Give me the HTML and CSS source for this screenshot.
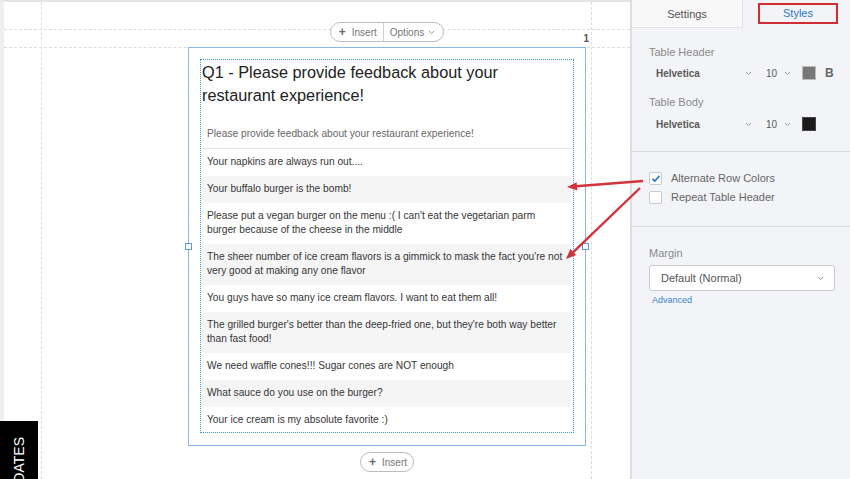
FILE: index.html
```html
<!DOCTYPE html>
<html lang="en">
<head>
    <meta charset="UTF-8">
    <meta name="viewport" content="width=device-width, initial-scale=1.0">
    <title>Survey Editor - Styles</title>
    <link rel="stylesheet" href="styles.css">
</head>
<body>
    <div class="canvas">
        <div class="guide guide-v guide-left"></div>
        <div class="guide guide-v guide-right"></div>
        <div class="guide guide-h guide-top"></div>
        <div class="guide guide-h guide-block"></div>

        <div class="stage">
            <div class="toolbar">
                <span></span>
                <div class="pill">
                    <span class="pill-part"><b class="plus">+</b> Insert</span>
                    <span class="pill-part pill-sep">Options
                        <svg width="7" height="5" viewBox="0 0 7 5"><path d="M1 1 L3.5 3.5 L6 1" fill="none" stroke="#999" stroke-width="1"/></svg>
                    </span>
                </div>
                <span class="q-number">1</span>
            </div>

            <div class="card">
                <span class="handle handle-l"></span>
                <span class="handle handle-r"></span>
                <div class="question">
                    <h2 class="q-title">Q1 - Please provide feedback about your restaurant experience!</h2>
                    <div class="table">
                        <div class="table-head">Please provide feedback about your restaurant experience!</div>
                        <div class="row">Your napkins are always run out....</div>
                        <div class="row">Your buffalo burger is the bomb!</div>
                        <div class="row">Please put a vegan burger on the menu :( I can't eat the vegetarian parm burger because of the cheese in the middle</div>
                        <div class="row">The sheer number of ice cream flavors is a gimmick to mask the fact you're not very good at making any one flavor</div>
                        <div class="row">You guys have so many ice cream flavors. I want to eat them all!</div>
                        <div class="row">The grilled burger's better than the deep-fried one, but they're both way better than fast food!</div>
                        <div class="row">We need waffle cones!!! Sugar cones are NOT enough</div>
                        <div class="row">What sauce do you use on the burger?</div>
                        <div class="row">Your ice cream is my absolute favorite :)</div>
                    </div>
                </div>
            </div>

            <div class="bottom-bar">
                <div class="pill">
                    <span class="pill-part"><b class="plus">+</b> Insert</span>
                </div>
            </div>
        </div>
    </div>

    <div class="panel">
        <div class="tabs">
            <div class="tab">Settings</div>
            <div class="tab tab-active"><span class="tab-box">Styles</span></div>
        </div>

        <div class="section">
            <div class="label">Table Header</div>
            <div class="font-row">
                <span class="font-name">Helvetica</span>
                <svg class="chev" width="7" height="5" viewBox="0 0 7 5"><path d="M1 1 L3.5 3.5 L6 1" fill="none" stroke="#999" stroke-width="1"/></svg>
                <span class="font-size">10</span>
                <svg class="chev chev-size" width="7" height="5" viewBox="0 0 7 5"><path d="M1 1 L3.5 3.5 L6 1" fill="none" stroke="#999" stroke-width="1"/></svg>
                <span class="swatch swatch-gray"></span>
                <span class="bold-toggle">B</span>
            </div>
            <div class="label label-gap">Table Body</div>
            <div class="font-row">
                <span class="font-name">Helvetica</span>
                <svg class="chev" width="7" height="5" viewBox="0 0 7 5"><path d="M1 1 L3.5 3.5 L6 1" fill="none" stroke="#999" stroke-width="1"/></svg>
                <span class="font-size">10</span>
                <svg class="chev chev-size" width="7" height="5" viewBox="0 0 7 5"><path d="M1 1 L3.5 3.5 L6 1" fill="none" stroke="#999" stroke-width="1"/></svg>
                <span class="swatch swatch-black"></span>
            </div>
        </div>

        <div class="section section-checks">
            <label class="check-row">
                <span class="checkbox">
                    <svg width="10" height="9" viewBox="0 0 10 9"><path d="M1.5 4.8 L3.8 7 L8.5 1.8" fill="none" stroke="#1f74c8" stroke-width="1.6"/></svg>
                </span>
                Alternate Row Colors
            </label>
            <label class="check-row">
                <span class="checkbox"></span>
                Repeat Table Header
            </label>
        </div>

        <div class="section section-margin">
            <div class="label">Margin</div>
            <div class="select">
                <span>Default (Normal)</span>
                <svg width="7" height="5" viewBox="0 0 7 5"><path d="M1 1 L3.5 3.5 L6 1" fill="none" stroke="#999" stroke-width="1"/></svg>
            </div>
            <a class="link" href="#">Advanced</a>
        </div>
    </div>

    <div class="updates-tab"><span>UPDATES</span></div>

    <svg class="arrows" width="850" height="479" viewBox="0 0 850 479">
        <line x1="643" y1="181" x2="576" y2="186.3" stroke="#d2323c" stroke-width="2.4"/>
        <polygon points="567,187 577.3,190.4 576.7,182.2" fill="#d2323c"/>
        <line x1="640" y1="188" x2="573" y2="252.3" stroke="#d2323c" stroke-width="2.4"/>
        <polygon points="566,259 576.2,255.1 570.4,249.1" fill="#d2323c"/>
    </svg>
</body>
</html>
```

FILE: styles.css
```css
body {
    margin: 0;
    height: 479px;
    overflow: hidden;
    display: flex;
    position: relative;
    font-family: "Liberation Sans", Arial, sans-serif;
    background-color: #fff;
    color: #333;
}

/* ---- canvas ---- */

.canvas {
    width: 626px;
    flex-shrink: 0;
    position: relative;
    border-top: 2px solid #e4e4e4;
    border-left: 4px solid #efefef;
    box-sizing: content-box;
}

.guide {
    position: absolute;
}

.guide-v {
    top: 0;
    bottom: 0;
    border-left: 1px dashed #dcdcdc;
}

.guide-h {
    left: 0;
    right: 0;
    border-top: 1px dashed #dcdcdc;
}

.guide-left {
    left: 37px;
}

.guide-right {
    left: 587px;
}

.guide-top {
    top: 27px;
}

.guide-block {
    top: 45px;
}

.stage {
    position: relative;
    margin-left: 184px;
    width: 398px;
}

.toolbar {
    height: 45px;
    display: grid;
    grid-template-columns: 1fr auto 1fr;
    align-items: start;
}

.toolbar .pill {
    margin-top: 20px;
}

.q-number {
    justify-self: end;
    align-self: end;
    margin-right: -3px;
    margin-bottom: 3px;
    font-size: 10px;
    font-weight: bold;
    color: #555;
}

.pill {
    display: flex;
    align-items: center;
    height: 18px;
    border: 1px solid #bdbdbd;
    border-radius: 10px;
    background-color: #fff;
    font-size: 10px;
    color: #777;
}

.pill-part {
    display: flex;
    align-items: center;
    gap: 4px;
    padding: 0 6px 0 8px;
    height: 100%;
}

.pill-sep {
    border-left: 1px solid #cfcfcf;
    padding: 0 8px 0 6px;
}

.plus {
    font-size: 12px;
    color: #666;
    margin-right: 2px;
}

.card {
    position: relative;
    border: 1px solid #8ab6ee;
    padding: 11px 11px 12px 11px;
    background-color: #fff;
}

.handle {
    position: absolute;
    top: 195px;
    width: 5px;
    height: 5px;
    border: 1px solid #5b9be6;
    background-color: #fff;
}

.handle-l {
    left: -4px;
}

.handle-r {
    right: -4px;
}

.question {
    border: 1px dotted #3d9be0;
}

.q-title {
    margin: 0;
    padding: 1px 40px 0 1px;
    font-size: 16.3px;
    line-height: 23px;
    font-weight: normal;
    color: #222;
}

.table {
    margin: 0 2px 0 0;
    font-size: 10.2px;
    line-height: 14px;
}

.table-head {
    padding: 20px 6px 7px 6px;
    color: #666;
    border-bottom: 1px solid #e6e6e6;
}

.row {
    padding: 6px 4px 7px 6px;
    color: #363636;
}

.row:last-child {
    padding-bottom: 5px;
}

.row:nth-child(odd) {
    background-color: #f5f5f5;
}

.bottom-bar {
    display: flex;
    justify-content: center;
    margin-top: 6px;
}

/* ---- side panel ---- */

.panel {
    width: 218px;
    border-left: 2px solid #dedede;
    background-color: #f3f4f7;
    font-size: 11px;
    color: #666;
}

.tabs {
    display: flex;
    height: 28px;
}

.tab {
    width: 110px;
    background-color: #f8f8f8;
    border-right: 1px solid #e0e0e0;
    border-bottom: 1px solid #e0e0e0;
    text-align: center;
    line-height: 28px;
    font-size: 11px;
    color: #555;
}

.tab-active {
    flex: 1;
    background-color: transparent;
    border: none;
    text-align: left;
    padding: 3px 0 0 15px;
    line-height: normal;
}

.tab-box {
    display: block;
    width: 76px;
    height: 17px;
    border: 2px solid #d02d37;
    text-align: center;
    line-height: 17px;
    color: #2a78cf;
}

.section {
    padding: 17px 0 17px 17px;
    border-bottom: 1px solid #dddddd;
}

.label {
    line-height: 14px;
    color: #8a8a8a;
}

.label-gap {
    margin-top: 12px;
}

.font-row {
    display: flex;
    align-items: center;
    height: 20px;
    margin-top: 4px;
    padding-left: 7px;
    font-size: 10px;
    color: #5a5a5a;
}

.label-gap + .font-row {
    margin-top: 5px;
}

.font-name {
    width: 89px;
    font-weight: bold;
}

.font-size {
    margin-left: 14px;
    width: 12px;
}

.chev-size {
    margin-left: 6px;
}

.swatch {
    width: 12px;
    height: 12px;
    margin-left: 11px;
    border: 1px solid #bbb;
}

.swatch-gray {
    background-color: #777;
}

.swatch-black {
    background-color: #1a1a1a;
    border-color: #444;
}

.bold-toggle {
    margin-left: 9px;
    font-size: 12px;
    font-weight: bold;
    color: #666;
}

.section-checks {
    padding-top: 19px;
    padding-bottom: 22px;
    display: flex;
    flex-direction: column;
    gap: 5px;
}

.check-row {
    display: flex;
    align-items: center;
    gap: 9px;
    height: 14px;
    color: #666;
}

.checkbox {
    width: 11px;
    height: 11px;
    border: 1px solid #c9c9c9;
    border-radius: 2px;
    background-color: #fff;
    display: flex;
    align-items: center;
    justify-content: center;
}

.section-margin {
    border-bottom: none;
    padding-top: 19px;
}

.select {
    display: flex;
    align-items: center;
    justify-content: space-between;
    width: 163px;
    height: 24px;
    margin-top: 5px;
    padding: 0 10px 0 11px;
    border: 1px solid #cccccc;
    border-radius: 3px;
    background-color: #fff;
    color: #555;
}

.link {
    display: block;
    margin: 3px 0 0 3px;
    font-size: 9px;
    line-height: 12px;
    color: #3b82c9;
    text-decoration: none;
}

/* ---- overlays ---- */

.updates-tab {
    position: absolute;
    left: 0;
    top: 421px;
    width: 38px;
    height: 58px;
    background-color: #000;
    overflow: hidden;
}

.updates-tab span {
    display: block;
    margin: 16px 0 0 11px;
    writing-mode: vertical-rl;
    transform: rotate(180deg);
    font-size: 14px;
    color: #fff;
    line-height: 16px;
}

.arrows {
    position: absolute;
    left: 0;
    top: 0;
    pointer-events: none;
}
```
